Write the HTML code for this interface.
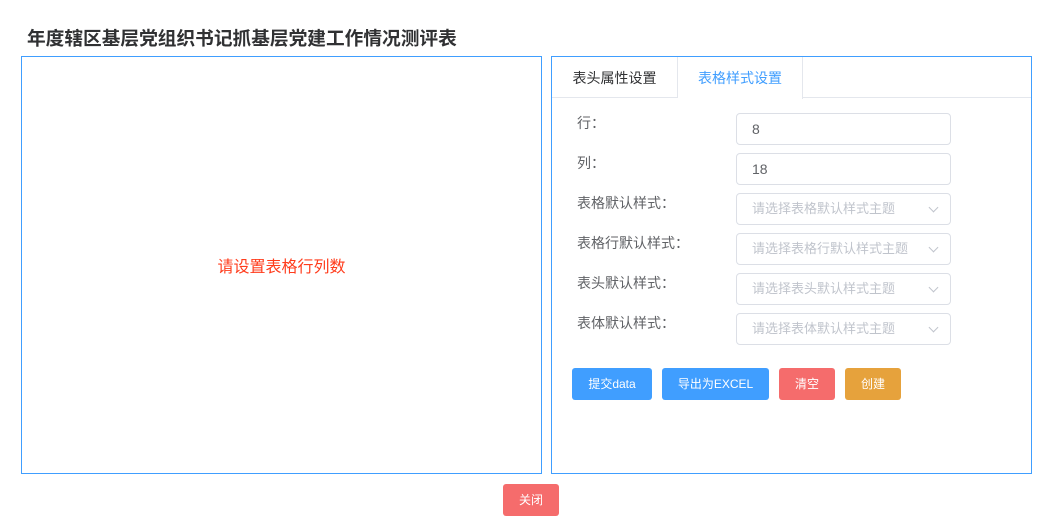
<!DOCTYPE html>
<html><head><meta charset="utf-8"><style>
*{box-sizing:border-box;margin:0;padding:0}
body{width:1057px;height:531px;background:#fff;font-family:"Liberation Sans","Noto Sans CJK SC",sans-serif;position:relative;overflow:hidden;color:#606266}
.abs{position:absolute}
h1{position:absolute;left:27px;top:24px;font-size:18.7px;font-weight:bold;color:#303133}
.panel{position:absolute;border:1px solid #409eff;top:56px;height:418px}
.tabs{position:absolute;left:0;top:0;right:0;height:41px;background:#fff;border-bottom:1px solid #e4e7ed}
.tab{position:absolute;top:0;height:41px;line-height:42px;font-size:14px;text-align:center}
.lbl{position:absolute;left:25px;font-size:14px;color:#606266}
.inp{position:absolute;left:184px;width:215px;height:32px;border:1px solid #dcdfe6;border-radius:4px;font-size:14px;line-height:30px;padding-left:15px;color:#606266}
.ph{color:#c0c4cc;font-size:13px}
.arr{position:absolute;right:13px;top:10px;width:7px;height:7px;border-right:1px solid #c0c4cc;border-bottom:1px solid #c0c4cc;transform:rotate(45deg)}
.btn{position:absolute;top:368px;height:32px;line-height:32px;color:#fff;font-size:12px;text-align:center;border-radius:3px}
</style></head><body>
<h1>年度辖区基层党组织书记抓基层党建工作情况测评表</h1>
<div class="panel" style="left:21px;width:521px">
<div class="abs" style="left:0;right:0;top:196px;text-align:center;color:#ff3c1c;font-size:16px">请设置表格行列数</div>
</div>
<div class="panel" style="left:551px;width:481px">
<div class="tabs"></div>
<div class="tab" style="left:0;width:126px;color:#303133;border-right:1px solid #e4e7ed;border-bottom:1px solid #e4e7ed">表头属性设置</div>
<div class="tab" style="left:126px;width:125px;background:#fff;color:#409eff;border-right:1px solid #e4e7ed;height:42px">表格样式设置</div>
<div class="lbl" style="top:56px">行：</div>
<div class="lbl" style="top:96px">列：</div>
<div class="lbl" style="top:136px">表格默认样式：</div>
<div class="lbl" style="top:176px">表格行默认样式：</div>
<div class="lbl" style="top:216px">表头默认样式：</div>
<div class="lbl" style="top:256px">表体默认样式：</div>
<div class="inp" style="top:56px">8</div>
<div class="inp" style="top:96px">18</div>
<div class="inp ph" style="top:136px">请选择表格默认样式主题<i class="arr"></i></div>
<div class="inp ph" style="top:176px">请选择表格行默认样式主题<i class="arr"></i></div>
<div class="inp ph" style="top:216px">请选择表头默认样式主题<i class="arr"></i></div>
<div class="inp ph" style="top:256px">请选择表体默认样式主题<i class="arr"></i></div>
</div>
<div class="btn" style="left:572px;width:80px;background:#409eff">提交data</div>
<div class="btn" style="left:662px;width:107px;background:#409eff">导出为EXCEL</div>
<div class="btn" style="left:779px;width:56px;background:#f56c6c">清空</div>
<div class="btn" style="left:845px;width:56px;background:#e6a23c">创建</div>
<div class="btn" style="left:503px;top:484px;width:56px;background:#f56c6c">关闭</div>
</body></html>
